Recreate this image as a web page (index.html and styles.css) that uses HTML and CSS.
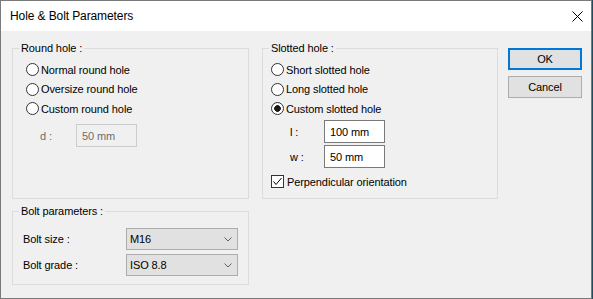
FILE: index.html
```html
<!DOCTYPE html>
<html lang="en">
<head>
    <meta charset="UTF-8">
    <title>Hole &amp; Bolt Parameters</title>
    <link rel="stylesheet" href="styles.css">
</head>
<body>
    <div class="window">
        <div class="titlebar">
            <span class="title">Hole &amp; Bolt Parameters</span>
            <svg class="close" width="11" height="11" viewBox="0 0 11 11">
                <path d="M0.5 0.5 L10.5 10.5 M10.5 0.5 L0.5 10.5" stroke="#000" stroke-width="1" fill="none"/>
            </svg>
        </div>

        <div class="client">
            <div class="groups">
                <fieldset class="group round">
                    <legend>Round hole :</legend>
                    <div class="body">
                        <div class="choice"><span class="radio"></span>Normal round hole</div>
                        <div class="choice"><span class="radio"></span>Oversize round hole</div>
                        <div class="choice"><span class="radio"></span>Custom round hole</div>
                        <div class="field disabled">
                            <span>d :</span>
                            <input class="text-input" type="text" value="50 mm" disabled>
                        </div>
                    </div>
                </fieldset>

                <fieldset class="group slotted">
                    <legend>Slotted hole :</legend>
                    <div class="body">
                        <div class="choice"><span class="radio"></span>Short slotted hole</div>
                        <div class="choice"><span class="radio"></span>Long slotted hole</div>
                        <div class="choice"><span class="radio on"></span>Custom slotted hole</div>
                        <div class="fields">
                            <div class="field">
                                <span>l :</span>
                                <input class="text-input" type="text" value="100 mm">
                            </div>
                            <div class="field">
                                <span>w :</span>
                                <input class="text-input" type="text" value="50 mm">
                            </div>
                        </div>
                        <div class="choice check-row">
                            <span class="checkbox">
                                <svg width="11" height="11" viewBox="0 0 11 11">
                                    <path d="M1.5 5.5 L4 8.5 L9.5 2" stroke="#000" stroke-width="1" fill="none"/>
                                </svg>
                            </span>Perpendicular orientation
                        </div>
                    </div>
                </fieldset>

                <fieldset class="group bolt">
                    <legend>Bolt parameters :</legend>
                    <div class="body">
                        <span>Bolt size :</span>
                        <div class="combo">
                            <span>M16</span>
                            <svg width="8" height="5" viewBox="0 0 8 5"><path d="M0.5 0.5 L4 4 L7.5 0.5" stroke="#606060" fill="none"/></svg>
                        </div>
                        <span>Bolt grade :</span>
                        <div class="combo">
                            <span>ISO 8.8</span>
                            <svg width="8" height="5" viewBox="0 0 8 5"><path d="M0.5 0.5 L4 4 L7.5 0.5" stroke="#606060" fill="none"/></svg>
                        </div>
                    </div>
                </fieldset>
            </div>

            <div class="actions">
                <button class="btn default" type="button">OK</button>
                <button class="btn" type="button">Cancel</button>
            </div>
        </div>
    </div>
</body>
</html>
```

FILE: styles.css
```css
body {
    margin: 0;
    background-color: #1f4e61;
}
.window {
    width: 592px;
    height: 299px;
    box-sizing: border-box;
    border: 1px solid #7a7a7a;
    background-color: #f0f0f0;
    font-family: "Liberation Sans", Arial, sans-serif;
    font-size: 11px;
    letter-spacing: -0.1px;
    color: #000;
    display: flex;
    flex-direction: column;
}
.titlebar {
    height: 30px;
    flex: none;
    background-color: #fff;
    display: flex;
    align-items: center;
    justify-content: space-between;
    padding: 0 8px 0 9px;
}
.title {
    font-size: 12px;
}
.close {
    display: block;
}
.client {
    flex: 1;
    display: flex;
    gap: 10px;
    padding: 11px 0 0 11px;
}
.groups {
    display: grid;
    grid-template-columns: 237px 236px;
    grid-template-rows: 157px 80px;
    column-gap: 13px;
    row-gap: 6px;
    align-content: start;
}
.group {
    margin: 0;
    padding: 0;
    min-width: 0;
    box-sizing: border-box;
    border: 1px solid #dcdcdc;
}
.group legend {
    padding: 0 2px;
    margin-left: 6px;
    line-height: 13px;
}
.round .body {
    padding: 5px 0 0 13px;
}
.slotted .body {
    padding: 5px 0 0 8px;
}
.choice {
    display: flex;
    align-items: center;
    gap: 2px;
    height: 19.5px;
}
.radio {
    flex: none;
    width: 13px;
    height: 13px;
    box-sizing: border-box;
    border: 1px solid #333;
    border-radius: 50%;
    background-color: #fff;
}
.radio.on {
    background: radial-gradient(circle, #1a1a1a 3px, #fff 3.6px);
}
.checkbox {
    flex: none;
    width: 13px;
    height: 13px;
    box-sizing: border-box;
    border: 1px solid #333;
    background-color: #fff;
}
.checkbox svg {
    display: block;
}
.check-row {
    margin-top: 4px;
    gap: 3px;
}
.field {
    display: grid;
    align-items: center;
    height: 23px;
}
.round .field {
    grid-template-columns: 36px 61px;
    margin: 5.5px 0 0 14px;
}
.fields {
    display: grid;
    row-gap: 2px;
    margin: 1.5px 0 0 19px;
}
.slotted .field {
    grid-template-columns: 34px 61px;
}
.text-input {
    width: 61px;
    height: 23px;
    box-sizing: border-box;
    margin: 0;
    border: 1px solid #7a7a7a;
    background-color: #fff;
    padding: 0 0 0 5px;
    font: inherit;
    letter-spacing: inherit;
    color: #000;
    outline: none;
}
.disabled {
    color: #6d6d6d;
}
.disabled .text-input {
    border-color: #cccccc;
    background-color: #f0f0f0;
    color: #6d6d6d;
}
.bolt .body {
    display: grid;
    grid-template-columns: 103px 112px;
    row-gap: 4px;
    align-items: center;
    padding: 10px 10px 0 10px;
}
.combo {
    height: 22px;
    box-sizing: border-box;
    border: 1px solid #adadad;
    background-color: #e1e1e1;
    display: flex;
    align-items: center;
    justify-content: space-between;
    padding: 0 5px 0 3px;
}
.combo svg {
    display: block;
}
.actions {
    display: flex;
    flex-direction: column;
    gap: 6px;
    padding-top: 6px;
}
.btn {
    width: 74px;
    height: 22px;
    box-sizing: border-box;
    margin: 0;
    padding: 0;
    border: 1px solid #adadad;
    background-color: #e1e1e1;
    font: inherit;
    letter-spacing: inherit;
    color: #000;
}
.btn.default {
    border: 2px solid #0078d7;
}
```
